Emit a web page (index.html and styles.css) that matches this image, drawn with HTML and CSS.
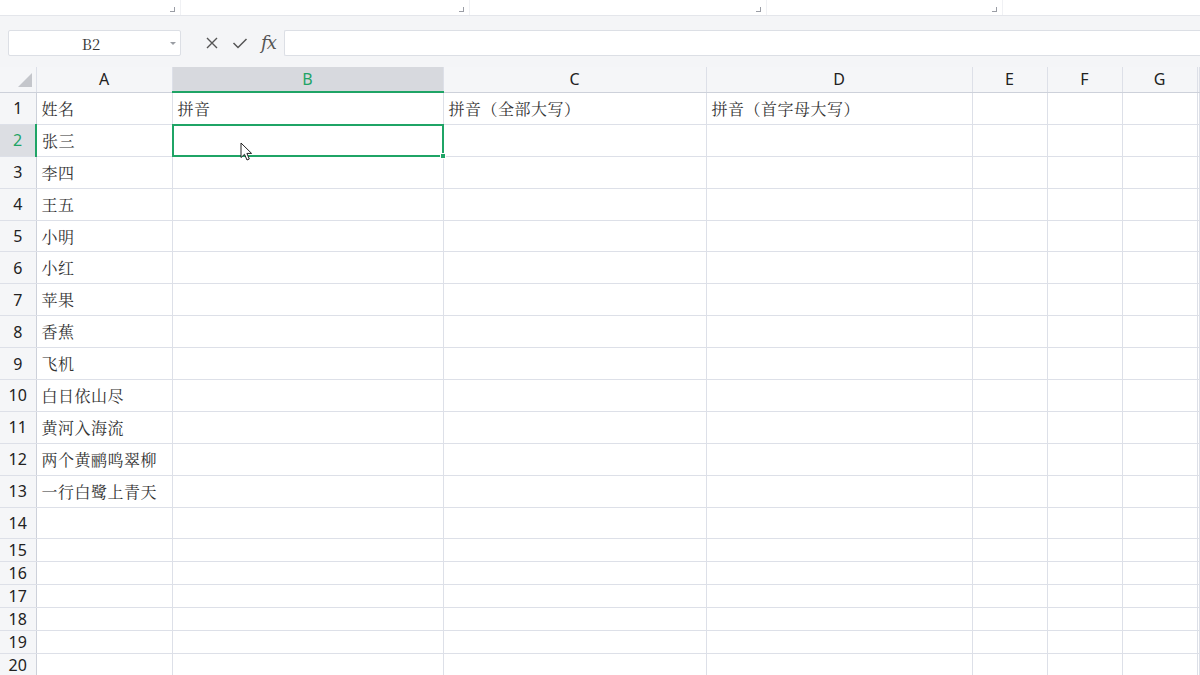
FILE: index.html
```html
<!DOCTYPE html>
<html>
<head>
    <meta charset="utf-8">
    <title>拼音</title>
    <link rel="stylesheet" href="styles.css">
</head>
<body>
    <!-- 顶部功能区的底边 -->
    <div class="ribbon">
        <div class="group g1"><span class="launcher"></span></div>
        <div class="group g2"><span class="launcher"></span></div>
        <div class="group g3"><span class="launcher"></span></div>
        <div class="group g4"><span class="launcher"></span></div>
        <div class="group g5"></div>
    </div>

    <!-- 编辑栏 -->
    <div class="formula-bar">
        <div class="name-box">
            <span class="ref">B2</span>
            <span class="caret"></span>
        </div>
        <div class="fx-tools">
            <svg width="14" height="14" viewBox="0 0 14 14"><path d="M2 2 L12 12 M12 2 L2 12" stroke="#555" stroke-width="1.4" fill="none"/></svg>
            <svg width="16" height="14" viewBox="0 0 16 14"><path d="M1.5 7 L6 11.5 L14.5 3" stroke="#555" stroke-width="1.5" fill="none"/></svg>
            <span class="fx">fx</span>
        </div>
        <div class="formula-input"></div>
    </div>

    <!-- 表格区域 -->
    <div class="sheet">
        <table class="grid">
            <colgroup>
                <col class="c-row"><col class="c-a"><col class="c-b"><col class="c-c"><col class="c-d">
                <col class="c-e"><col class="c-f"><col class="c-g"><col>
            </colgroup>
            <thead>
                <tr class="head">
                    <th class="corner"><span class="tri"></span></th>
                    <th>A</th><th class="active">B</th><th>C</th><th>D</th>
                    <th>E</th><th>F</th><th>G</th><th></th>
                </tr>
            </thead>
            <tbody id="rows"></tbody>
        </table>
        <svg class="pointer" width="14" height="20" viewBox="0 0 14 20">
            <path d="M1 1 L1 15.5 L4.5 12.3 L7 18 L9.3 17 L6.9 11.4 L11.6 11.4 Z" fill="#fff" stroke="#222" stroke-width="1" stroke-linejoin="round"/>
        </svg>
    </div>

    <script>
        // 各行数据：A 列姓名，第 1 行为表头
        const data = [
            ['姓名', '拼音', '拼音（全部大写）', '拼音（首字母大写）'],
            ['张三'], ['李四'], ['王五'], ['小明'], ['小红'], ['苹果'], ['香蕉'], ['飞机'],
            ['白日依山尽'], ['黄河入海流'], ['两个黄鹂鸣翠柳'], ['一行白鹭上青天']
        ];
        const tbody = document.getElementById('rows');
        for (let i = 1; i <= 20; i++) {
            const tr = document.createElement('tr');
            tr.className = i <= 14 ? 'tall' : 'short';
            const th = document.createElement('th');
            th.className = 'num' + (i === 2 ? ' active' : '');
            th.textContent = i;
            tr.appendChild(th);
            const row = data[i - 1] || [];
            for (let j = 0; j < 8; j++) {
                const td = document.createElement('td');
                td.textContent = row[j] || '';
                if (i === 2 && j === 1) {
                    td.className = 'selected';
                    td.innerHTML = '<div class="sel"><span class="handle"></span></div>';
                }
                tr.appendChild(td);
            }
            tbody.appendChild(tr);
        }
    </script>
</body>
</html>
```

FILE: styles.css
```css
body {
    margin: 0;
    width: 1200px;
    height: 675px;
    overflow: hidden;
    background: #fff;
    font-family: 'Noto Sans', 'Open Sans', sans-serif;
    color: #333;
}

/* 功能区底边 */
.ribbon {
    display: flex;
    height: 15px;
    border-bottom: 1px solid #e4e6eb;
    background: #fff;
}
.group {
    position: relative;
    border-right: 1px solid #f0f1f4;
}
.g1 { width: 180px; }
.g2 { width: 288px; }
.g3 { width: 296px; }
.g4 { width: 235px; }
.g5 { flex: 1; border-right: none; }
.launcher {
    position: absolute;
    right: 5px;
    bottom: 3px;
    width: 4px;
    height: 4px;
    border-right: 1.5px solid #9a9da5;
    border-bottom: 1.5px solid #9a9da5;
}

/* 编辑栏 */
.formula-bar {
    display: flex;
    align-items: center;
    height: 51px;
    padding: 0 0 0 8px;
    background: #f4f5f7;
    box-sizing: border-box;
}
.name-box {
    display: flex;
    align-items: center;
    width: 173px;
    height: 26px;
    margin-top: 3px;
    background: #fff;
    border: 1px solid #dcdfe5;
    border-radius: 2px;
    box-sizing: border-box;
}
.ref {
    flex: 1;
    text-align: center;
    padding-left: 3px;
    font-family: 'Noto Serif CJK SC', 'Liberation Serif', serif;
    font-size: 15px;
    color: #333;
}
.caret {
    width: 0;
    height: 0;
    margin-right: 4px;
    border-left: 3px solid transparent;
    border-right: 3px solid transparent;
    border-top: 3px solid #9a9da3;
}
.fx-tools {
    display: flex;
    align-items: center;
    gap: 13px;
    margin: 3px 0 0 24px;
    width: 79px;
}
.fx {
    font-family: 'DejaVu Serif', 'Liberation Serif', serif;
    font-style: italic;
    font-size: 18px;
    color: #555;
    letter-spacing: -1px;
    line-height: 1;
}
.formula-input {
    flex: 1;
    height: 26px;
    margin-top: 3px;
    background: #fff;
    border: 1px solid #dcdfe5;
    border-right: none;
    border-radius: 2px 0 0 2px;
    box-sizing: border-box;
}

/* 表格 */
.sheet {
    position: relative;
}
.grid {
    border-collapse: collapse;
    table-layout: fixed;
    width: 1200px;
}
.c-row { width: 36px; }
.c-a { width: 136px; }
.c-b { width: 271px; }
.c-c { width: 263px; }
.c-d { width: 266px; }
.c-e, .c-f, .c-g { width: 75px; }

.grid th, .grid td {
    padding: 0;
    border: 1px solid #dde0e8;
    overflow: hidden;
    white-space: nowrap;
}
.grid tr > :first-child { border-left: none; }
.head th {
    height: 24px;
    background: #f5f6f8;
    border-top: none;
    border-bottom-color: #cdd1da;
    font-weight: normal;
    font-size: 16px;
    color: #222;
    text-align: center;
}
.head th.active {
    background: #d7d9de;
    color: #1fa466;
    border-bottom: 2px solid #1fa466;
}
.corner {
    position: relative;
}
.tri {
    position: absolute;
    right: 4px;
    bottom: 5px;
    width: 0;
    height: 0;
    border-left: 14px solid transparent;
    border-bottom: 14px solid #c4c6cb;
}

.num {
    background: #f5f6f8;
    border-right-color: #cdd1da !important;
    font-weight: normal;
    font-size: 16px;
    color: #222;
    text-align: center;
}
.num.active {
    background: #dcdee3;
    color: #1fa466;
    border-right: 2px solid #1fa466 !important;
}
.tall th, .tall td { height: 30.9px; }
.short th, .short td { height: 21.5px; }

.grid td {
    padding-left: 5px;
    font-family: 'Noto Serif CJK SC', 'Noto Sans CJK SC', serif;
    font-size: 16px;
    letter-spacing: 0.5px;
    color: #333;
}
.grid td.selected {
    position: relative;
    overflow: visible;
}
.sel {
    position: absolute;
    left: -1px;
    top: -1px;
    right: -1px;
    bottom: -1px;
    border: 2px solid #1fa466;
    z-index: 1;
}
.handle {
    position: absolute;
    right: -4px;
    bottom: -4px;
    width: 4px;
    height: 4px;
    background: #1fa466;
    border: 1px solid #fff;
}

/* 鼠标指针 */
.pointer {
    position: absolute;
    left: 240px;
    top: 75px;
    z-index: 2;
}
```
